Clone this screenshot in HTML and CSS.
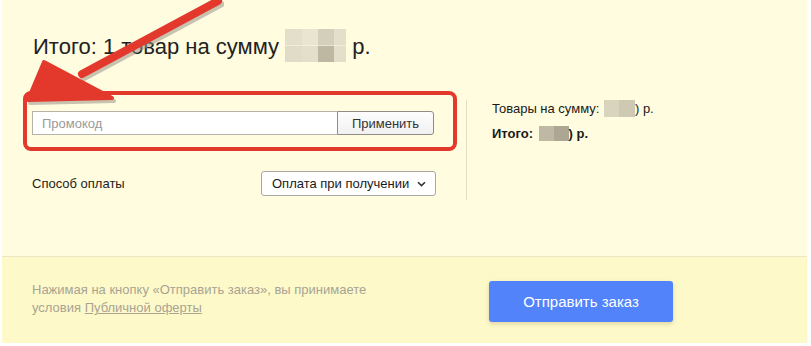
FILE: index.html
```html
<!DOCTYPE html>
<html lang="ru">
<head>
<meta charset="utf-8">
<title>Оформление заказа</title>
<link rel="stylesheet" href="styles.css">
</head>
<body>
<div class="page">
  <section class="summary">
    <h1 class="title">Итого: 1 товар на сумму <span class="blur blur-title"></span> р.</h1>
    <div class="cols">
      <div class="left">
        <div class="mark">
          <div class="promo">
            <input class="promo-input" type="text" placeholder="Промокод">
            <button class="promo-btn" type="button">Применить</button>
          </div>
        </div>
        <div class="pay-row">
          <span class="pay-label">Способ оплаты</span>
          <div class="select">
            <span>Оплата при получении</span>
            <svg class="chev" width="9" height="6" viewBox="0 0 9 6"><path d="M1 1.2 L4.5 4.6 L8 1.2" fill="none" stroke="#333" stroke-width="1.6"/></svg>
          </div>
        </div>
      </div>
      <div class="right">
        <p class="line">Товары на сумму: <span class="blur blur-sum"></span>) р.</p>
        <p class="line bold">Итого: <span class="blur blur-total"></span>) р.</p>
      </div>
    </div>
    <svg class="arrow" width="240" height="120" viewBox="0 0 240 120">
      <g class="arrow-shadow" transform="translate(2,3)" fill="#9c948a" stroke="#9c948a" opacity="0.55">
        <line x1="216" y1="1" x2="80" y2="74" stroke-width="8" stroke-linecap="round"/>
        <polygon points="26,100 42,62 110,98" stroke-width="4" stroke-linejoin="round"/>
      </g>
      <g fill="#e3392d" stroke="#e3392d">
        <line x1="216" y1="1" x2="80" y2="74" stroke-width="8" stroke-linecap="round"/>
        <polygon points="26,100 42,62 110,98" stroke-width="4" stroke-linejoin="round"/>
      </g>
    </svg>
  </section>
  <section class="checkout">
    <p class="terms">Нажимая на кнопку «Отправить заказ», вы принимаете условия <a href="#" class="terms-link">Публичной оферты</a></p>
    <button class="submit" type="button">Отправить заказ</button>
  </section>
</div>
</body>
</html>
```

FILE: styles.css
```css
* { box-sizing: border-box; }
html, body { margin: 0; padding: 0; background: #ffffff; }
body {
  font-family: "Liberation Sans", Arial, sans-serif;
  color: #222;
  padding: 0 4px 3px 2px;
}
.page {
  width: 805px;
  height: 343px;
  display: flex;
  flex-direction: column;
}
.summary {
  position: relative;
  background: #fffcdf;
  padding: 35px 0 0 30px;
  border-bottom: 1px solid #ece6c4;
  height: 257px;
}
.title {
  margin: 0 0 0 1px;
  font-size: 22px;
  font-weight: normal;
  line-height: 24px;
  color: #222;
}
.blur {
  display: inline-block;
}
.blur-title {
  width: 61px;
  height: 33px;
  vertical-align: -8px;
  margin-top: -6px;
  background:
    linear-gradient(to right, #e3dfcb 0 17px, #e9e5d1 17px 33px, #d4cfba 33px 49px, #e4dfcb 49px) top / 100% 50% no-repeat,
    linear-gradient(to right, #e1dcc7 0 17px, #e4dfca 17px 33px, #beb8a3 33px 49px, #e4dfcb 49px) bottom / 100% 50% no-repeat;
}
.cols {
  display: flex;
  margin-top: 29px;
}
.left {
  width: 404px;
  margin-right: 30px;
}
.mark {
  margin: 0 -21px 0 -9px;
  border: 4px solid #e3392d;
  border-radius: 8px;
  padding: 16px 19px 12px 5px;
}
.promo {
  display: flex;
  height: 24px;
}
.promo-input {
  flex: 1;
  height: 24px;
  border: 1px solid #b5b2a8;
  border-right: none;
  background: #fff;
  font-family: inherit;
  font-size: 13px;
  padding: 0 9px;
  color: #222;
  outline: none;
}
.promo-input::placeholder { color: #9a9a9a; }
.promo-btn {
  width: 97px;
  height: 24px;
  border: 1px solid #8f8d86;
  border-radius: 0 3px 3px 0;
  background: linear-gradient(#fdfdfd, #f1f1f1);
  font-family: inherit;
  font-size: 13px;
  color: #333;
  padding: 0;
}
.pay-row {
  display: flex;
  justify-content: space-between;
  align-items: center;
  margin-top: 20px;
}
.pay-label {
  font-size: 13px;
  color: #222;
}
.select {
  width: 175px;
  height: 25px;
  border: 1px solid #a9a7a0;
  border-radius: 3px;
  background: #fff;
  display: flex;
  align-items: center;
  justify-content: space-between;
  padding: 0 9px 0 10px;
  font-size: 13px;
  color: #1a1a1a;
}
.chev { display: block; }
.right {
  margin-top: 9px;
  height: 100px;
  border-left: 1px solid #e6dfc3;
  padding-left: 25px;
}
.line {
  margin: 0 0 8px;
  font-size: 13px;
  line-height: 17px;
  color: #1a1a1a;
}
.bold { font-weight: bold; }
.blur-sum {
  width: 31px;
  height: 17px;
  vertical-align: -4px;
  margin-left: 1px;
  background: linear-gradient(to right, #d8d4be 0 15px, #cdc9b3 15px);
}
.blur-total {
  width: 30px;
  height: 15px;
  vertical-align: -3px;
  margin-left: 2px;
  background: linear-gradient(to right, #beb8a4 0 15px, #aca692 15px);
}
.arrow {
  position: absolute;
  left: 0;
  top: 0;
  overflow: visible;
}
.checkout {
  flex: 1;
  background: #fef9c9;
  display: flex;
  align-items: flex-start;
  padding: 24px 0 0 30px;
}
.terms {
  margin: 0;
  width: 360px;
  font-size: 13px;
  line-height: 18px;
  color: #a8a493;
  margin-right: 97px;
}
.terms-link {
  color: #a8a493;
  text-decoration: underline;
}
.submit {
  width: 184px;
  height: 41px;
  border: none;
  border-radius: 3px;
  background: #5283fb;
  color: #fff;
  font-family: inherit;
  font-size: 15px;
  box-shadow: 0 2px 4px rgba(120, 110, 60, 0.25);
  padding: 0;
}
```
